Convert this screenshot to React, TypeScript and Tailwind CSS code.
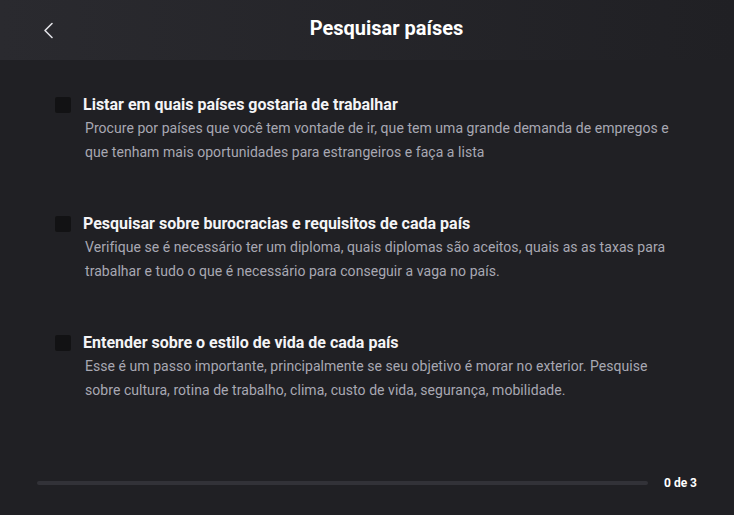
import React from "react";

const items = [
  {
    title: "Listar em quais países gostaria de trabalhar",
    desc: "Procure por países que você tem vontade de ir, que tem uma grande demanda de empregos e que tenham mais oportunidades para estrangeiros e faça a lista",
  },
  {
    title: "Pesquisar sobre burocracias e requisitos de cada país",
    desc: "Verifique se é necessário ter um diploma, quais diplomas são aceitos, quais as as taxas para trabalhar e tudo o que é necessário para conseguir a vaga no país.",
  },
  {
    title: "Entender sobre o estilo de vida de cada país",
    desc: "Esse é um passo importante, principalmente se seu objetivo é morar no exterior. Pesquise sobre cultura, rotina de trabalho, clima, custo de vida, segurança, mobilidade.",
  },
];

export default function App() {
  return (
    <div
      className="w-[734px] h-[515px] bg-[#202024] flex flex-col text-white"
      style={{ fontFamily: "Roboto, 'Liberation Sans', sans-serif" }}
    >
      <header className="h-[60px] flex items-center pl-[43px] pr-10 bg-gradient-to-r from-[#2a2a2f] to-[#202024]">
        <button className="w-[36px] h-[60px] flex items-center">
          <svg width="11" height="17" viewBox="0 0 11 17" fill="none">
            <path d="M9 1.5 L2 8.5 L9 15.5" stroke="#e1e1e6" strokeWidth="1.6" strokeLinecap="round" strokeLinejoin="round" />
          </svg>
        </button>
        <h1 className="flex-1 text-center text-[20px] font-bold leading-none pb-1">Pesquisar países</h1>
      </header>
      <main className="flex-1 flex flex-col pl-[55px] pr-[54px] pt-[33px] gap-[48px]">
        {items.map((it) => (
          <div key={it.title} className="flex flex-col">
            <div className="flex items-center gap-3 h-[23px]">
              <span className="w-4 h-4 rounded-[2px] bg-[#121214] shrink-0" />
              <span className="text-[16px] font-bold leading-6 text-[#f4f4f6]">{it.title}</span>
            </div>
            <p className="pl-[30px] text-[14px] leading-6 text-[#a8a8b3] tracking-[0.05px]">{it.desc}</p>
          </div>
        ))}
      </main>
      <footer className="h-[48px] flex items-start pl-[37px] pr-[37px] gap-4">
        <div className="flex-1 h-1 mt-[14px] rounded-full bg-[#323238]" />
        <span className="text-[12px] font-bold leading-none mt-[10px]">0 de 3</span>
      </footer>
    </div>
  );
}
